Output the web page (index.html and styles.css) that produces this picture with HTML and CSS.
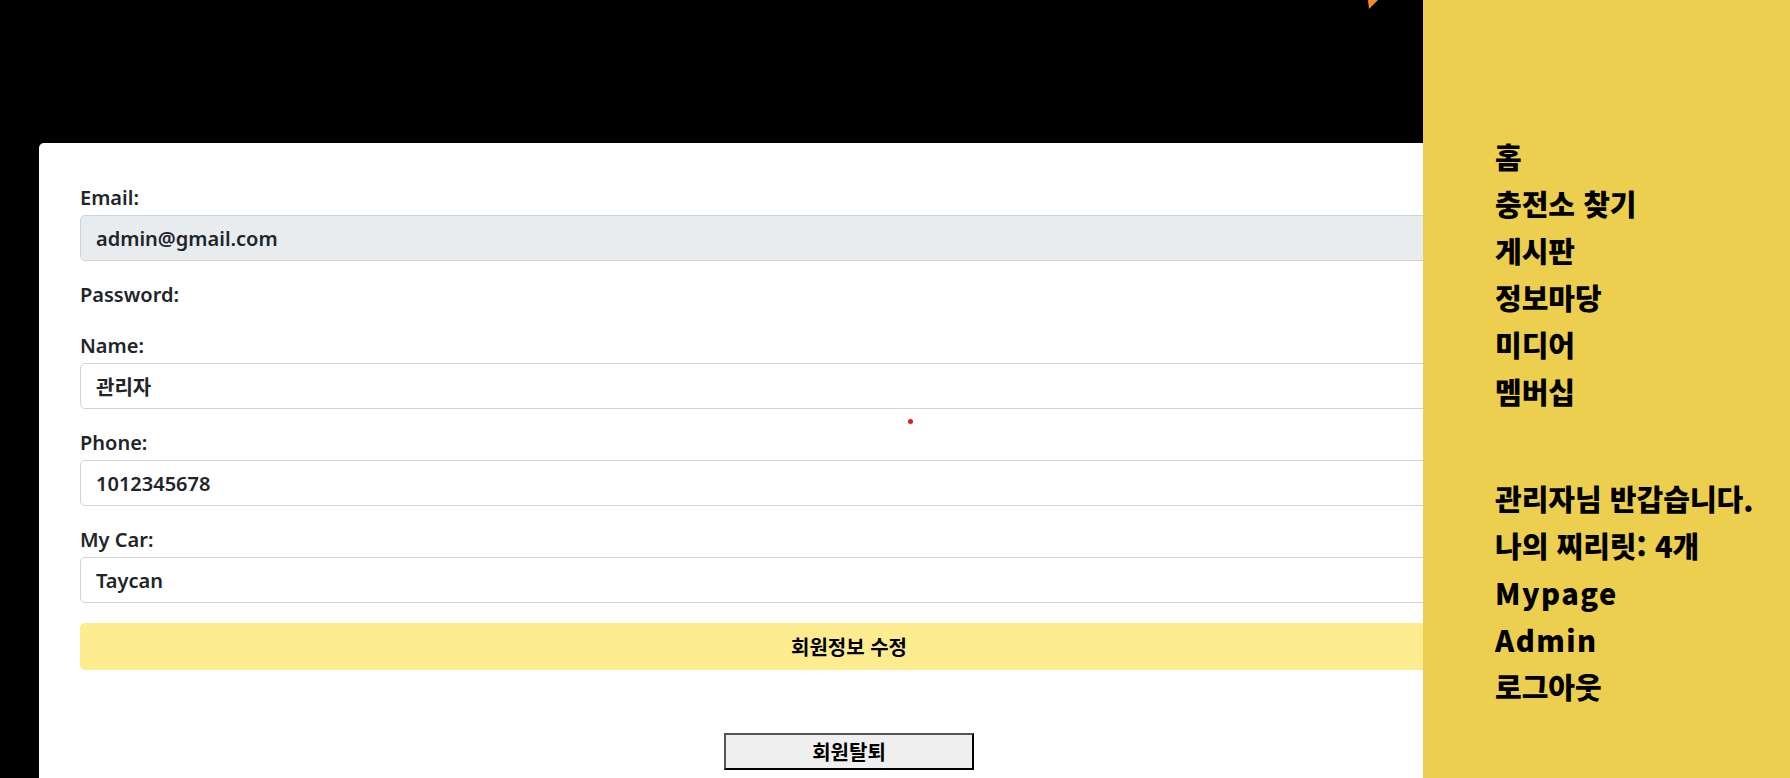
FILE: index.html
```html
<!DOCTYPE html>
<html lang="ko">
<head>
    <meta charset="UTF-8">
    <title>마이페이지</title>
    <link rel="stylesheet" href="styles.css">
</head>
<body>
    <!-- logo tip peeking in from above -->
    <svg class="logo-tip" width="12" height="10" viewBox="0 0 12 10">
        <polygon points="0,0 10,0 1,9" fill="#f7892e"/>
    </svg>

    <main class="page">
        <div class="card">
            <form class="profile-form" id="profileForm">
                <div class="form-group">
                    <label for="email">Email:</label>
                    <input type="text" id="email" class="form-input" value="admin@gmail.com" disabled>
                </div>

                <div class="form-group password-group">
                    <label for="password">Password:</label>
                    <input type="password" id="password" class="form-input hidden-input">
                </div>

                <div class="form-group">
                    <label for="name">Name:</label>
                    <input type="text" id="name" class="form-input" value="관리자">
                </div>

                <div class="form-group">
                    <label for="phone">Phone:</label>
                    <input type="text" id="phone" class="form-input" value="1012345678">
                </div>

                <div class="form-group">
                    <label for="car">My Car:</label>
                    <input type="text" id="car" class="form-input" value="Taycan">
                </div>

                <button type="submit" class="btn-update">회원정보 수정</button>
            </form>

            <div class="withdraw-row">
                <button type="button" class="btn-withdraw">회원탈퇴</button>
            </div>
        </div>
    </main>

    <nav class="sidebar">
        <ul class="menu">
            <li>홈</li>
            <li>충전소 찾기</li>
            <li>게시판</li>
            <li>정보마당</li>
            <li>미디어</li>
            <li>멤버십</li>
        </ul>
        <ul class="menu user-menu">
            <li>관리자님 반갑습니다.</li>
            <li>나의 찌리릿: 4개</li>
            <li class="latin">Mypage</li>
            <li class="latin">Admin</li>
            <li>로그아웃</li>
        </ul>
    </nav>

    <span class="red-dot"></span>
</body>
</html>
```

FILE: styles.css
```css
body {
    margin: 0;
    background-color: #000;
    font-family: "Noto Sans", "Noto Sans CJK KR", sans-serif;
    color: #212529;
    overflow: hidden;
}

.logo-tip {
    position: absolute;
    left: 1368px;
    top: 0;
}

.page {
    padding-top: 143px;
    padding-left: 39px;
}

.card {
    width: 1620px;
    min-height: 700px;
    background-color: #fff;
    border-radius: 5px;
    padding: 43px 41px;
    box-sizing: border-box;
}

.form-group {
    margin-bottom: 22px;
}

.password-group {
    margin-bottom: 27px;
}

label {
    display: block;
    font-size: 20px;
    line-height: 24px;
    font-weight: 600;
    margin-bottom: 5px;
}

.form-input {
    display: block;
    width: 100%;
    height: 46px;
    padding: 0 15px;
    border: 1px solid #ced4da;
    border-radius: 5px;
    box-sizing: border-box;
    font-family: "Noto Sans", "Noto Sans CJK KR", sans-serif;
    font-size: 20px;
    font-weight: 600;
    color: #212529;
    background-color: #fff;
}

.form-input:disabled {
    background-color: #e9ecef;
    -webkit-text-fill-color: #212529;
    opacity: 1;
}

.hidden-input {
    display: none;
}

.btn-update {
    display: block;
    width: 100%;
    height: 47px;
    margin-top: -2px;
    border: none;
    border-radius: 5px;
    background-color: #feec91;
    font-family: "Noto Sans CJK KR", sans-serif;
    font-size: 20px;
    font-weight: 700;
    color: #000;
    cursor: pointer;
}

.withdraw-row {
    display: flex;
    justify-content: center;
    margin-top: 63px;
}

.btn-withdraw {
    width: 250px;
    height: 37px;
    background-color: #efefef;
    border: 2px solid;
    border-color: #555 #000 #000 #555;
    font-family: "Noto Sans CJK KR", sans-serif;
    font-size: 20px;
    font-weight: 700;
    color: #000;
    cursor: pointer;
}

.sidebar {
    position: fixed;
    top: 0;
    right: 0;
    width: 367px;
    height: 100%;
    background-color: #eccf4e;
    padding: 133px 0 0 72px;
    box-sizing: border-box;
}

.menu {
    list-style: none;
    margin: 0;
    padding: 0;
    font-family: "Noto Sans CJK KR", sans-serif;
    font-size: 29px;
    line-height: 47px;
    font-weight: 900;
    color: #000;
    white-space: nowrap;
}

.menu .latin {
    letter-spacing: 1.5px;
}

.user-menu {
    margin-top: 60px;
}

.red-dot {
    position: absolute;
    left: 908px;
    top: 419px;
    width: 5px;
    height: 5px;
    border-radius: 50%;
    background-color: #e8191f;
}
```
